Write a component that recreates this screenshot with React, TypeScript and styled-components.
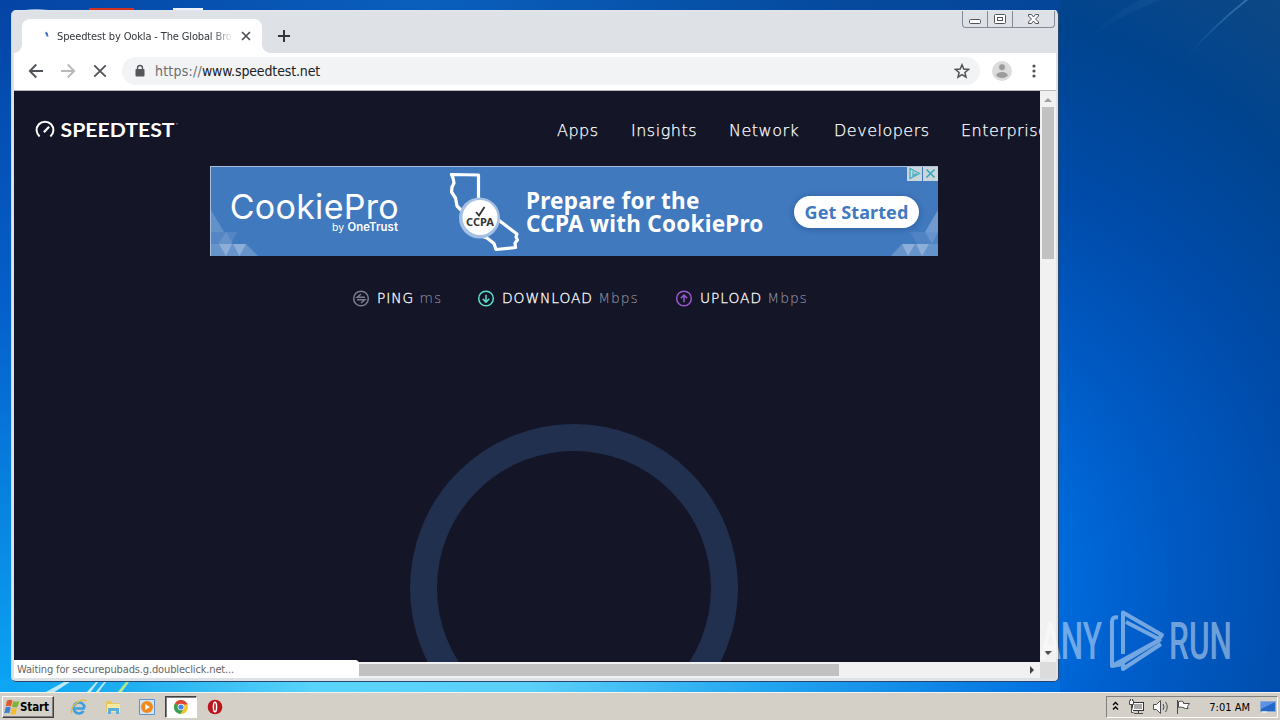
import styled, { createGlobalStyle } from "styled-components";

const GlobalStyle = createGlobalStyle`
  * {
    box-sizing: border-box;
  }
  body {
    margin: 0;
    overflow: hidden;
    font-family: "DejaVu Sans Condensed", "DejaVu Sans", "Liberation Sans", sans-serif;
  }
  svg {
    display: block;
    flex: none;
  }
`;

const Desktop = styled.div`
  position: relative;
  width: 1280px;
  height: 720px;
  overflow: hidden;
  display: flex;
  flex-direction: column;
  justify-content: flex-end;
  background: #0055c0;
`;
const Wallpaper = styled.svg`
  position: absolute;
  left: 0;
  top: 0;
`;

// browser window
const Window = styled.div`
  position: absolute;
  left: 11px;
  top: 10px;
  width: 1048px;
  height: 672px;
  display: flex;
  flex-direction: column;
  padding: 0 2px 3px;
  border: 1px solid #27466f;
  border-top-color: #dfe6ef;
  border-left-color: #c9d6e6;
  border-radius: 5px;
  background: #dee1e6;
  overflow: hidden;
`;
const TabStrip = styled.div`
  height: 42px;
  flex: none;
  display: flex;
  align-items: flex-start;
  justify-content: space-between;
`;
const Tabs = styled.div`
  display: flex;
  align-items: flex-end;
  height: 42px;
  padding-left: 8px;
`;
const Tab = styled.div`
  position: relative;
  width: 240px;
  height: 34px;
  display: flex;
  align-items: center;
  padding: 0 10px 0 18px;
  border-radius: 8px 8px 0 0;
  background: #fff;
  &:before,
  &:after {
    content: "";
    position: absolute;
    bottom: 0;
    width: 8px;
    height: 8px;
  }
  &:before {
    left: -8px;
    background: radial-gradient(circle at 0 0, transparent 7.5px, #fff 8px);
  }
  &:after {
    right: -8px;
    background: radial-gradient(circle at 100% 0, transparent 7.5px, #fff 8px);
  }
`;
const TabTitle = styled.div`
  width: 176px;
  margin: 0 7px 0 5px;
  overflow: hidden;
  white-space: nowrap;
  font-size: 11px;
  letter-spacing: -0.14px;
  color: #33363a;
  mask-image: linear-gradient(90deg, #000 155px, transparent 176px);
`;
const NewTab = styled.div`
  height: 34px;
  display: flex;
  align-items: center;
  padding-left: 15px;
`;
const Caption = styled.div`
  display: flex;
  height: 17px;
  margin-right: 1px;
  border: 1px solid #858b96;
  border-top: none;
  border-radius: 0 0 4px 4px;
`;
const CaptionButton = styled.div<{ $width: number }>`
  width: ${(props) => props.$width}px;
  display: flex;
  align-items: center;
  justify-content: center;
  & + & {
    border-left: 1px solid #858b96;
  }
`;

const Toolbar = styled.div`
  height: 38px;
  flex: none;
  display: flex;
  align-items: center;
  padding: 0 15px 2px 14px;
  border-bottom: 1px solid #b6b8bb;
  background: #fff;
`;
const NavButtons = styled.div`
  display: flex;
  gap: 16px;
`;
const Omnibox = styled.div`
  width: 858px;
  height: 28px;
  margin: 0 12px 0 14px;
  display: flex;
  align-items: center;
  padding: 0 10px 0 12px;
  border-radius: 14px;
  background: #f1f3f4;
`;
const Url = styled.div`
  flex: 1;
  margin-left: 9px;
  font-size: 14px;
  letter-spacing: -0.14px;
  color: #202124;
  span {
    color: #6a6e73;
    letter-spacing: 0.22px;
  }
`;
const MenuButton = styled.div`
  margin-left: 20px;
`;

// web page
const Viewport = styled.div`
  flex: 1;
  min-height: 0;
  display: flex;
`;
const Page = styled.div`
  width: 1026px;
  height: 571px;
  overflow: hidden;
  background: #141526;
`;
const Header = styled.div`
  height: 75px;
  width: 1060px;
  display: flex;
  align-items: center;
  padding: 3px 0 0 21px;
`;
const Menu = styled.div`
  display: flex;
  margin-left: 377px;
`;
const MenuItem = styled.div<{ $width: number }>`
  width: ${(props) => props.$width}px;
  flex: none;
  font-family: "DejaVu Sans", sans-serif;
  font-weight: 200;
  font-size: 16px;
  letter-spacing: 0.5px;
  color: #fff;
  -webkit-text-stroke: 0.25px #fff;
`;
const Banner = styled.div`
  position: relative;
  width: 728px;
  height: 90px;
  margin-left: 196px;
  display: flex;
  align-items: center;
  border: 1px solid #a9bfdc;
  border-right: none;
  border-bottom: none;
  background: #4179bf;
  overflow: hidden;
`;
const BannerArt = styled.svg`
  position: absolute;
  left: -1px;
  top: -1px;
`;
const Brand = styled.div`
  position: relative;
  width: 169px;
  margin-left: 19px;
  display: flex;
  flex-direction: column;
  align-items: flex-end;
  color: #fff;
`;
const BrandName = styled.div`
  font: 400 34px/32px Inter, sans-serif;
  letter-spacing: 0.3px;
  white-space: nowrap;
`;
const BrandBy = styled.div`
  margin-top: -1px;
  padding-right: 1px;
  font: 400 10.5px/11px Inter, sans-serif;
  letter-spacing: 0.1px;
  b {
    font-weight: 600;
    font-size: 11.3px;
  }
`;
const Slogan = styled.div`
  width: 250px;
  margin-left: 127px;
  font: 700 22.5px/23px "Noto Sans", sans-serif;
  letter-spacing: 0.23px;
  white-space: nowrap;
  color: #fff;
`;
const GetStarted = styled.div`
  position: relative;
  width: 125px;
  height: 32px;
  margin: 0 0 0 18px;
  border-radius: 16px;
  background: #fff;
  box-shadow: 0 1px 7px rgba(10, 40, 90, 0.35);
  color: #4179bf;
  text-align: center;
  font: 700 18px/32px "Noto Sans", sans-serif;
  letter-spacing: 0.1px;
  white-space: nowrap;
`;
const AdChoices = styled.div`
  position: absolute;
  right: 0;
  top: -1px;
  display: flex;
  gap: 1px;
`;
const AdBox = styled.div`
  width: 15px;
  height: 15px;
  display: flex;
  align-items: center;
  justify-content: center;
  background: #ccd5d9;
`;
const Results = styled.div`
  display: flex;
  padding: 33px 0 0 338px;
`;
const Result = styled.div<{ $width: number }>`
  width: ${(props) => props.$width}px;
  flex: none;
  display: flex;
  align-items: center;
  gap: 7px;
  white-space: nowrap;
`;
const ResultLabel = styled.div`
  font-family: "DejaVu Sans", sans-serif;
  font-weight: 200;
  font-size: 13.8px;
  line-height: 18px;
  letter-spacing: 0.95px;
  color: #fff;
  -webkit-text-stroke: 0.3px #fff;
  span {
    color: #9192a3;
    -webkit-text-stroke: 0.1px #9192a3;
  }
`;
const Gauge = styled.div`
  width: 328px;
  height: 328px;
  margin: 117px 0 0 396px;
  border: 27px solid #22304f;
  border-radius: 50%;
`;

const VScroll = styled.div`
  width: 16px;
  height: 587px;
  display: flex;
  flex-direction: column;
  align-items: center;
  justify-content: space-between;
  padding: 5px 0 22px;
  background: #f1f1f1;
`;
const VThumb = styled.div`
  width: 12px;
  height: 152px;
  margin: 4px 0 auto;
  background: #c1c1c1;
`;
const BottomRow = styled.div`
  height: 16px;
  flex: none;
  display: flex;
  align-items: center;
  background: #f1f1f1;
`;
const StatusBubble = styled.div`
  width: 345px;
  height: 18px;
  margin-top: -2px;
  padding-left: 3px;
  border-radius: 0 4px 0 0;
  background: #fff;
  font-size: 11px;
  line-height: 20px;
  color: #666;
  letter-spacing: -0.14px;
  white-space: nowrap;
  z-index: 1;
`;
const HThumb = styled.div`
  width: 480px;
  height: 12px;
  margin-right: 191px;
  background: #c1c1c1;
`;
const Corner = styled.div`
  width: 16px;
  height: 16px;
  margin-left: auto;
  background: #dcdcdc;
`;

const Watermark = styled.svg`
  position: absolute;
  left: 1036px;
  top: 604px;
`;

// taskbar
const Taskbar = styled.div`
  position: relative;
  height: 28px;
  display: flex;
  align-items: center;
  padding: 1px 2px 0 2px;
  border-top: 1px solid #f5f3ef;
  background: #d4d0c8;
`;
const Start = styled.div`
  width: 52px;
  height: 22px;
  display: flex;
  align-items: center;
  padding-left: 1px;
  border: 1px solid;
  border-color: #fff #404040 #404040 #fff;
  box-shadow: inset -1px -1px #808080;
  font-size: 11.5px;
  font-weight: 700;
  letter-spacing: -0.1px;
  color: #000;
`;
const QuickLaunch = styled.div`
  display: flex;
  margin-left: 8px;
`;
const TaskButton = styled.div<{ $active?: boolean }>`
  width: ${(props) => (props.$active ? 32 : 34)}px;
  height: 22px;
  margin: ${(props) => (props.$active ? "0 1px" : "0")};
  display: flex;
  align-items: center;
  justify-content: center;
  border: 1px solid transparent;
  ${(props) => props.$active && "border-color: #404040 #fff #fff #404040; background: #fff; box-shadow: inset 1px 1px #808080;"}
`;
const Tray = styled.div`
  height: 22px;
  width: 172px;
  margin-left: auto;
  display: flex;
  align-items: center;
  padding: 0 1px 0 4px;
  border: 1px solid;
  border-color: #808080 #fff #fff #808080;
`;
const Clock = styled.div`
  margin: 0 10px 0 auto;
  font-size: 11px;
  color: #000;
`;

const menu = [
  { label: "Apps", width: 74 },
  { label: "Insights", width: 98 },
  { label: "Network", width: 105 },
  { label: "Developers", width: 127 },
  { label: "Enterprise", width: 100 },
];

const results = [
  { label: "PING", unit: "ms", width: 125, color: "#7b7c8d", path: "M12 6.700H4.200L8 3.500M4 9.300h7.800L8 12.500" },
  { label: "DOWNLOAD", unit: "Mbps", width: 198, color: "#5eddcb", path: "M8 4.2v7.4M4.8 8.4L8 11.6l3.2-3.2" },
  { label: "UPLOAD", unit: "Mbps", width: 150, color: "#9a58cf", path: "M8 11.8V4.6M4.8 7.8L8 4.6l3.2 3.2" },
];

function DesktopBackground() {
  return (
    <Wallpaper width="1280" height="720" viewBox="0 0 1280 720">
      <defs>
        <linearGradient id="left" x1="0" y1="0" x2="0" y2="1">
          <stop offset="0" stopColor="#0444a4" />
          <stop offset="0.45" stopColor="#0560cb" />
          <stop offset="1" stopColor="#0ba5f5" />
        </linearGradient>
        <linearGradient id="top" x1="0" y1="0" x2="1" y2="0">
          <stop offset="0" stopColor="#0444a4" />
          <stop offset="0.4" stopColor="#0a5fbd" />
          <stop offset="0.8" stopColor="#054a9d" />
          <stop offset="1" stopColor="#04469a" />
        </linearGradient>
        <radialGradient id="right" gradientUnits="userSpaceOnUse" cx="880" cy="580" r="730">
          <stop offset="0.1" stopColor="#0078e8" />
          <stop offset="0.26" stopColor="#0069da" />
          <stop offset="0.4" stopColor="#005ac4" />
          <stop offset="0.58" stopColor="#004cab" />
          <stop offset="0.8" stopColor="#00448f" />
          <stop offset="1" stopColor="#104882" />
        </radialGradient>
        <linearGradient id="bottom" x1="0" y1="0" x2="1" y2="0">
          <stop offset="0" stopColor="#0da6f5" />
          <stop offset="0.12" stopColor="#1eaef0" />
          <stop offset="0.3" stopColor="#5ad4fa" />
          <stop offset="0.5" stopColor="#5bd0f8" />
          <stop offset="0.72" stopColor="#23a6f0" />
          <stop offset="1" stopColor="#006fdf" />
        </linearGradient>
        <linearGradient id="glow" x1="0" y1="1" x2="1" y2="0">
          <stop offset="0" stopColor="#6ab5e8" stopOpacity="0" />
          <stop offset="1" stopColor="#6ab5e8" stopOpacity="0.4" />
        </linearGradient>
      </defs>
      <rect x="1050" width="230" height="694" fill="url(#right)" />
      <rect width="1060" height="12" fill="url(#top)" />
      <rect width="14" height="692" fill="url(#left)" />
      <rect y="680" width="1060" height="14" fill="url(#bottom)" />
      <path d="M1182 62Q1215 26 1248 0h-3Q1212 26 1182 62z" fill="url(#glow)" />
      <path d="M1086 42Q1110 20 1160 0h-20Q1108 16 1086 42z" fill="url(#glow)" opacity="0.2" />
      <path d="M44 693l20-11h6l-17 11zM86 693l10-11h2l-8 11zM95 693l9-11h2l-8 11z" fill="#bde8fa" />
      <path d="M117 693l9-11h3l-8 11z" fill="#b9e88a" />
      <path d="M25 10q10-2 23 0z" fill="#8fb1d8" />
      <path d="M89 8h45v3H89z" fill="#d2321f" />
      <path d="M173 8h30v2h-30z" fill="#eef2f8" />
    </Wallpaper>
  );
}

function SpeedtestLogo() {
  return (
    <svg width="145" height="22" viewBox="0 0 145 22" fill="none" stroke="#fff">
      <path d="M4.600 17.500A8.400 8.400 0 1 1 15.400 17.500" strokeWidth="2" />
      <path d="M8.900 13.200l5.200-5.500" strokeWidth="2.200" />
      <text x="25.5" y="17.800" textLength="114" lengthAdjust="spacingAndGlyphs" fill="#fff" stroke="none" fontFamily="Lato, sans-serif" fontWeight="700" fontSize="19">
        SPEEDTEST
      </text>
      <circle cx="142" cy="4.800" r="0.7" fill="#fff" stroke="none" opacity="0.6" />
    </svg>
  );
}

function CookieProArt() {
  return (
    <BannerArt width="728" height="90" viewBox="0 0 728 90">
      <g fill="#fff">
        <path d="M1 44v22h13z" opacity="0.18" />
        <path d="M1 66h26l-6 12H1z" opacity="0.1" />
        <path d="M8 78l8-12 7 12z" opacity="0.1" />
        <path d="M9 78h13l-6 12zM23 78h13l-6.500 12z" opacity="0.25" />
        <path d="M1 78h35l12 12H1z" opacity="0.2" />
        <path d="M728 44v22h-13z" opacity="0.25" />
        <path d="M728 66h-28l7 12h21z" opacity="0.08" />
        <path d="M715 66l7 12 6-12z" opacity="0.14" />
        <path d="M719 78h-13l6 12zM705 78h-13l6 12z" opacity="0.25" />
        <path d="M728 78h-36l-11 12h47z" opacity="0.2" />
      </g>
      <path
        d="M241.500 8.500l27 .5V35l20 19 18.500 14-1 3 1.500 3-2.500 3 .5 4.500-19.500 2-2-6-7-5.500-10-3.500L256 56l-3-10-6-6-1.500-8-4-6 .5-5 2-4-1-5z"
        fill="none"
        stroke="#fff"
        strokeWidth="3.200"
        strokeLinejoin="round"
      />
      <circle cx="269.500" cy="52" r="20.500" fill="#a4c0e3" />
      <circle cx="270" cy="51.500" r="17.500" fill="#fff" />
      <path d="M266 46l3 3.500 5.500-8.500" fill="none" stroke="#333" strokeWidth="1.800" />
      <text x="256" y="60" textLength="28" lengthAdjust="spacingAndGlyphs" fontFamily="Noto Sans, sans-serif" fontWeight="700" fontSize="11" fill="#333">
        CCPA
      </text>
    </BannerArt>
  );
}

function AnyRunMark() {
  return (
    <Watermark width="200" height="72" viewBox="0 0 200 72">
      <g fill="#fff" fillOpacity="0.45" fontFamily="Roboto, sans-serif" fontWeight="500" fontSize="52">
        <text x="4" y="55" textLength="62" lengthAdjust="spacingAndGlyphs">
          ANY
        </text>
        <text x="133" y="55" textLength="63" lengthAdjust="spacingAndGlyphs">
          RUN
        </text>
      </g>
      <path
        d="M87 50V8.500l39 22.500-3 4-33-17M82 13.500q-6-1-6 4V62l49-27M76 62l11-2M125 35L87 58v7l38-25"
        fill="none"
        stroke="#fff"
        strokeOpacity="0.45"
        strokeWidth="4"
        strokeLinejoin="round"
      />
    </Watermark>
  );
}

function App() {
  return (
    <Desktop>
      <GlobalStyle />
      <DesktopBackground />
      <Window>
        <TabStrip>
          <Tabs>
            <Tab>
              <svg width="12" height="16" viewBox="0 0 12 16">
                <path d="M5.500 4.500q2 1 2 4" fill="none" stroke="#3f6fd6" strokeWidth="2" />
              </svg>
              <TabTitle>Speedtest by Ookla - The Global Broadband</TabTitle>
              <svg width="12" height="12" viewBox="0 0 12 12" stroke="#4b4e52" strokeWidth="1.700">
                <path d="M2 2l8 8M10 2l-8 8" />
              </svg>
            </Tab>
            <NewTab>
              <svg width="14" height="14" viewBox="0 0 14 14" stroke="#333639" strokeWidth="2">
                <path d="M7 1v12M1 7h12" />
              </svg>
            </NewTab>
          </Tabs>
          <Caption>
            <CaptionButton $width={24}>
              <svg width="14" height="14" viewBox="0 0 14 14">
                <rect x="1.500" y="7.500" width="11" height="4" rx="1" fill="#fff" stroke="#50535c" />
              </svg>
            </CaptionButton>
            <CaptionButton $width={25}>
              <svg width="13" height="12" viewBox="0 0 13 12" fill="#fff" stroke="#50535c">
                <rect x="0.500" y="1.500" width="11" height="9" rx="1" />
                <rect x="3.500" y="4.500" width="5" height="3" />
              </svg>
            </CaptionButton>
            <CaptionButton $width={42}>
              <svg width="14" height="12" viewBox="0 0 14 12">
                <path d="M1.500 1.500h3L6.500 4l2-2.500h3V3L8.500 6l3 3v1.500h-3L6.500 8l-2 2.500h-3V9l3-3-3-3z" fill="#fff" stroke="#50535c" />
              </svg>
            </CaptionButton>
          </Caption>
        </TabStrip>
        <Toolbar>
          <NavButtons>
            <svg width="16" height="16" viewBox="0 0 16 16" fill="none" stroke="#505357" strokeWidth="1.900">
              <path d="M15 8H2M8.300 1.500L1.800 8l6.500 6.500" />
            </svg>
            <svg width="16" height="16" viewBox="0 0 16 16" fill="none" stroke="#b7b9bb" strokeWidth="1.900">
              <path d="M1 8h13M7.700 1.500L14.200 8l-6.500 6.500" />
            </svg>
            <svg width="16" height="16" viewBox="0 0 16 16" fill="none" stroke="#505357" strokeWidth="1.900">
              <path d="M2.300 2.300l11.400 11.400M13.700 2.300L2.300 13.700" />
            </svg>
          </NavButtons>
          <Omnibox>
            <svg width="12" height="14" viewBox="0 0 12 14">
              <rect x="1.500" y="5" width="9" height="7.500" rx="1" fill="#54575b" />
              <path d="M3.500 5.500V4a2.500 2.500 0 0 1 5 0v1.500" fill="none" stroke="#54575b" strokeWidth="1.400" />
            </svg>
            <Url>
              <span>https://</span>www.speedtest.net
            </Url>
            <svg width="16" height="16" viewBox="0 0 16 16">
              <path d="M8 1.800l1.800 4.300 4.700.4-3.600 3 1.100 4.600-4-2.500-4 2.500 1.100-4.600-3.600-3 4.700-.4z" fill="none" stroke="#505357" strokeWidth="1.500" />
            </svg>
          </Omnibox>
          <svg width="20" height="20" viewBox="0 0 20 20">
            <circle cx="10" cy="10" r="10" fill="#dcdcdc" />
            <circle cx="10" cy="6.200" r="3" fill="#9c9c9c" />
            <ellipse cx="10" cy="14" rx="5.700" ry="3" fill="#9c9c9c" />
          </svg>
          <MenuButton>
            <svg width="4" height="14" viewBox="0 0 4 14" fill="#505357">
              <circle cx="2" cy="2" r="1.600" />
              <circle cx="2" cy="7" r="1.600" />
              <circle cx="2" cy="12" r="1.600" />
            </svg>
          </MenuButton>
        </Toolbar>
        <Viewport>
          <Page>
            <Header>
              <SpeedtestLogo />
              <Menu>
                {menu.map((item) => (
                  <MenuItem key={item.label} $width={item.width}>
                    {item.label}
                  </MenuItem>
                ))}
              </Menu>
            </Header>
            <Banner>
              <CookieProArt />
              <Brand>
                <BrandName>CookiePro</BrandName>
                <BrandBy>
                  by <b>OneTrust</b>
                </BrandBy>
              </Brand>
              <Slogan>
                Prepare for the
                <br />
                CCPA with CookiePro
              </Slogan>
              <GetStarted>Get Started</GetStarted>
              <AdChoices>
                <AdBox>
                  <svg width="13" height="13" viewBox="0 0 13 13" fill="none" stroke="#3aaec4" strokeWidth="1.200">
                    <path d="M2 1.500v10l9.500-5zM5 4.500v4l3.500-2" />
                  </svg>
                </AdBox>
                <AdBox>
                  <svg width="11" height="11" viewBox="0 0 11 11" stroke="#2aa9c0" strokeWidth="1.500">
                    <path d="M1.500 1.500l8 8M9.500 1.500l-8 8" />
                  </svg>
                </AdBox>
              </AdChoices>
            </Banner>
            <Results>
              {results.map((item) => (
                <Result key={item.label} $width={item.width}>
                  <svg width="18" height="18" viewBox="-1 -1.500 18 18" fill="none" stroke={item.color} strokeWidth="1.500">
                    <circle cx="8" cy="8" r="7.300" />
                    <path d={item.path} />
                  </svg>
                  <ResultLabel>
                    {item.label} <span>{item.unit}</span>
                  </ResultLabel>
                </Result>
              ))}
            </Results>
            <Gauge />
          </Page>
          <VScroll>
            <svg width="8" height="7" viewBox="0 0 8 7">
              <path d="M0 6l4-4 4 4z" fill="#a0a0a0" />
            </svg>
            <VThumb />
            <svg width="8" height="5" viewBox="0 0 8 5">
              <path d="M0 0l4 4 4-4z" fill="#505050" />
            </svg>
          </VScroll>
        </Viewport>
        <BottomRow>
          <StatusBubble>Waiting for securepubads.g.doubleclick.net...</StatusBubble>
          <HThumb />
          <svg width="5" height="8" viewBox="0 0 5 8">
            <path d="M0 0l4 4-4 4z" fill="#404040" />
          </svg>
          <Corner />
        </BottomRow>
      </Window>
      <AnyRunMark />
      <Taskbar>
        <Start>
          <svg width="16" height="16" viewBox="0 0 16 16">
            <path d="M3 1.500q3-1.500 5.500 0L7 7.500q-2.500-1.300-5.300 0z" fill="#e2582a" />
            <path d="M9.200 2q2.800 1.500 6.300 0L13.500 8q-2.700 1.300-5.500-.2z" fill="#7db53c" />
            <path d="M1.500 8.500q3-1.300 5.200 0l-1.500 6q-2.500-1.300-5 0z" fill="#3f7fd0" />
            <path d="M7.800 9q2.300 1.400 5.200.2l-1.500 5.800q-2.700 1.300-5.200 0z" fill="#f3bd2d" />
          </svg>
          Start
        </Start>
        <QuickLaunch>
          <TaskButton>
            <svg width="18" height="18" viewBox="0 0 18 18" fill="none">
              <path d="M14.800 10.500H5.200M14.500 9.800A5.500 5.500 0 1 0 13.600 13" stroke="#3d9fe0" strokeWidth="2.600" />
              <path d="M2 15.500Q-.5 11 6 5.500T16.500 3" stroke="#e5bd45" strokeWidth="1.400" />
            </svg>
          </TaskButton>
          <TaskButton>
            <svg width="18" height="18" viewBox="0 0 18 18">
              <path d="M2 3h5l1 2h7v9H2z" fill="#e9c65c" />
              <path d="M3 6h13v8H3z" fill="#f8e8a0" />
              <path d="M4 10h11v6h-3v-3H7v3H4z" fill="#5aaedd" />
            </svg>
          </TaskButton>
          <TaskButton>
            <svg width="18" height="18" viewBox="0 0 18 18">
              <path d="M1.500 1.500h15v15h-15z" fill="#d3e5f5" stroke="#5a95cf" />
              <circle cx="9" cy="9" r="6" fill="#f08a1d" />
              <path d="M7.300 6l4.500 3-4.500 3z" fill="#fff" />
            </svg>
          </TaskButton>
          <TaskButton $active>
            <svg width="16" height="16" viewBox="0 0 16 16">
              <circle cx="8" cy="8" r="7" fill="#f4c62c" />
              <path d="M8 8L1.900 4.500a7 7 0 0 1 12.200 0L14.500 5.500H8z" fill="#dc4437" />
              <path d="M8 8L1.900 4.500A7 7 0 0 0 7.400 15L10.500 10z" fill="#3a9e57" />
              <circle cx="8" cy="8" r="3.300" fill="#fff" />
              <circle cx="8" cy="8" r="2.600" fill="#4285e8" />
            </svg>
          </TaskButton>
          <TaskButton>
            <svg width="16" height="16" viewBox="0 0 16 16">
              <circle cx="8" cy="8" r="7.300" fill="#b9141a" />
              <ellipse cx="8" cy="8" rx="1.600" ry="4.800" fill="none" stroke="#fff" strokeWidth="1.500" />
            </svg>
          </TaskButton>
        </QuickLaunch>
        <Tray>
          <svg width="9" height="12" viewBox="0 0 9 12" fill="none" stroke="#000" strokeWidth="1.300">
            <path d="M2 4l2.500-2.500L7 4M2 8.500L4.500 6 7 8.500" />
          </svg>
          <svg width="72" height="18" viewBox="-1 0 72 18" fill="none" stroke="#4c4c4c">
            <rect x="11.500" y="4.500" width="11" height="8" fill="#a9a9a9" stroke="#333" />
            <rect x="12.500" y="5.500" width="9" height="6" stroke="#fff" />
            <path d="M13 15.500h9M17.500 13v2" />
            <path d="M8.500 2.500v4h4v-4M10.500 6.500v8h2M9.500 1v2M11.500 1v2" fill="#fff" />
            <path d="M32.500 6.500h3l4-4v13l-4-4h-3z" fill="#fff" />
            <path d="M42 6q2 3 0 6M44.500 4q3.500 5 0 10" />
            <path d="M56.500 2v14M57.500 3.500q3-1 5 .5v1.500h6l-2 3 .5 2q-3 .5-5-1-2-1-4.500 0z" fill="#fff" />
          </svg>
          <Clock>7:01 AM</Clock>
          <svg width="16" height="14" viewBox="0 0 16 14">
            <rect x="0.500" y="1.500" width="15" height="10" fill="#2468c8" stroke="#8aa9d6" />
            <path d="M1 2h14L1 9z" fill="#5a94e2" />
            <path d="M2 12h5" stroke="#fff" />
          </svg>
        </Tray>
      </Taskbar>
    </Desktop>
  );
}

export default App;
